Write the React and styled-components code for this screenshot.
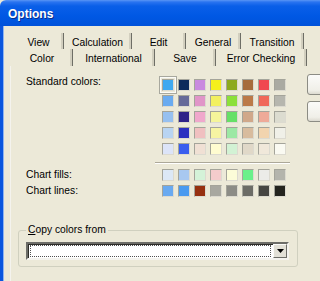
import React from "react";
import styled, { createGlobalStyle } from "styled-components";

const Global = createGlobalStyle`
  html, body {
    margin: 0;
    padding: 0;
    overflow: hidden;
    background: #ece9d8;
  }
`;

const Window = styled.div`
  width: 320px;
  height: 281px;
  display: flex;
  flex-direction: column;
  overflow: hidden;
  font-family: "Liberation Sans", Arial, sans-serif;
  font-size: 10px;
  color: #000;
`;

const TitleBar = styled.div`
  height: 26px;
  box-sizing: border-box;
  flex: none;
  display: flex;
  align-items: center;
  padding: 2px 0 0 8px;
  background: linear-gradient(
    #5a96f5 0,
    #2a74f0 2px,
    #0a5fe8 6px,
    #0058e4 16px,
    #0052da 26px
  );
  border-top-left-radius: 6px;
  color: #fff;
  font-weight: bold;
  font-size: 12px;
  text-shadow: 1px 1px 0 #0a2f8c;
`;

const Frame = styled.div`
  flex: 1;
  display: flex;
  flex-direction: column;
  border-left: 3px solid #0a56de;
  box-shadow: inset 1px 0 0 #8fb4f0;
  background: #ece9d8;
  padding-top: 7px;
`;

const TabRow = styled.div`
  display: flex;
  height: ${p => p.$h}px;
  margin-left: ${p => p.$indent}px;
  flex: none;
`;

const Tab = styled.div`
  box-sizing: border-box;
  flex: none;
  display: flex;
  align-items: center;
  justify-content: center;
  height: 100%;
  border-right: 1px solid #6e6e66;
  box-shadow: inset -2px 0 0 #d2cfbf;
  white-space: nowrap;
  overflow: hidden;
  padding-top: 2px;
  font-size: 10.3px;
`;

const Panel = styled.div`
  flex: 1;
  margin-left: 7px;
  border-left: 1px solid #f4f3ee;
  padding: 10px 0 0 7px;
  display: flex;
  flex-direction: column;
`;

const StandardRow = styled.div`
  display: flex;
  align-items: flex-start;
  padding-left: 8px;
`;

const Label = styled.div`
  width: 134px;
  flex: none;
  line-height: 12px;
  white-space: nowrap;
  font-size: 10.3px;
`;

const SwatchGrid = styled.div`
  display: grid;
  grid-template-columns: repeat(8, 16px);
  grid-auto-rows: 16px;
  margin-top: 1px;
  flex: none;
`;

const Cell = styled.div`
  display: flex;
  align-items: center;
  justify-content: center;
`;

const Swatch = styled.div`
  box-sizing: border-box;
  width: 12px;
  height: 12px;
  border: 1px solid;
  border-color: #a4a49a #dcdad0 #dcdad0 #a4a49a;
  background: ${p => p.$color};
  box-shadow: ${p =>
    p.$selected ? "0 0 0 1px #ece9d8, 0 0 0 2px #fbfbf8, 0 0 0 3px #a8a89e" : "none"};
`;

const SideButtons = styled.div`
  display: flex;
  flex-direction: column;
  gap: 6px;
  margin-left: 19px;
  margin-top: -2px;
  flex: none;
`;

const SideButton = styled.div`
  width: 75px;
  height: 21px;
  box-sizing: border-box;
  border: 1px solid #8c8c84;
  border-radius: 3px;
  background: linear-gradient(#fbfbf9, #f0efe8 80%, #dcdad0);
`;

const Divider = styled.div`
  margin: 5px 0 0 137px;
  width: 135px;
  height: 1px;
  background: #aca899;
  border-bottom: 1px solid #fff;
  flex: none;
`;

const ChartRows = styled.div`
  display: flex;
  flex-direction: column;
  margin-top: 3px;
  padding-left: 8px;
`;

const ChartRow = styled.div`
  display: flex;
  align-items: center;
  height: 16px;
`;

const SwatchLine = styled.div`
  display: grid;
  grid-template-columns: repeat(8, 16px);
  height: 16px;
`;

const Group = styled.fieldset`
  margin: 25px 0 0 0;
  width: 280px;
  box-sizing: border-box;
  border: 1px solid #d0d0bf;
  border-radius: 3px;
  padding: 6px 0 6px 7px;
  min-inline-size: 0;
`;

const Legend = styled.legend`
  margin-left: 0;
  padding: 0 2px 0 2px;
  line-height: 12px;
  font-size: 10.3px;
`;

const Combo = styled.div`
  width: 263px;
  height: 18px;
  box-sizing: border-box;
  display: flex;
  align-items: stretch;
  background: #fff;
  border: 2px solid;
  border-color: #6d6d68 #f4f3ee #f4f3ee #6d6d68;
  box-shadow: inset 1px 1px 0 #2c2c28;
`;

const ComboField = styled.div`
  flex: 1;
  margin: 1px 2px 1px 2px;
  border: 1px dotted #505050;
`;

const ComboArrow = styled.div`
  width: 14px;
  flex: none;
  box-sizing: border-box;
  display: flex;
  align-items: center;
  justify-content: center;
  background: #e2e0d6;
  border: 1px solid;
  border-color: #fbfbf8 #6d6d68 #6d6d68 #fbfbf8;
`;

const backTabs = [
  { label: "View", width: 50 },
  { label: "Calculation", width: 68 },
  { label: "Edit", width: 54 },
  { label: "General", width: 55 },
  { label: "Transition", width: 63 },
  { label: "Chart", width: 60 }
];

const frontTabs = [
  { label: "Color", width: 61 },
  { label: "International", width: 82 },
  { label: "Save", width: 61 },
  { label: "Error Checking", width: 91 },
  { label: "", width: 60 }
];

const standard = [
  ["#3fa9f0", "#0d2b5c", "#c98adf", "#f5f01c", "#8daa1e", "#a66c3c", "#f04850", "#aaaaa2"],
  ["#6aabf0", "#666a99", "#e095c8", "#f2f060", "#8ce03a", "#bb7a48", "#f0685a", "#b6b6ae"],
  ["#96c0f0", "#2e2288", "#f0a8cc", "#f5f59a", "#66e066", "#d0a88a", "#eeaa98", "#dcdcd0"],
  ["#b8d4f2", "#2b2fc0", "#f0c0c0", "#f6f4a2", "#9ce8a4", "#d8bc9e", "#f2d4ae", "#f0f0e8"],
  ["#dce4f8", "#3a5eee", "#f0e0d4", "#fffcd0", "#d2f2d4", "#e0d8c8", "#f0e8da", "#fafaf2"]
];

const chartFills = ["#dce8f6", "#a8c8f0", "#d4f2d8", "#f4cccc", "#fcfcd8", "#6af08a", "#ecece8", "#b4b4ac"];
const chartLines = ["#6aaaf0", "#4a9af0", "#963010", "#a8a8a0", "#8c8c86", "#6c6c66", "#464642", "#24241e"];

const App = () => {
  return (
    <>
      <Global />
      <Window>
        <TitleBar>Options</TitleBar>
        <Frame>
          <TabRow $h={16} $indent={11}>
            {backTabs.map(t => (
              <Tab key={t.label} style={{ width: t.width }}>
                {t.label}
              </Tab>
            ))}
          </TabRow>
          <TabRow $h={17} $indent={9}>
            {frontTabs.map((t, i) => (
              <Tab key={i} style={{ width: t.width }}>
                {t.label}
              </Tab>
            ))}
          </TabRow>

          <Panel>
            <StandardRow>
              <Label>Standard colors:</Label>
              <SwatchGrid>
                {standard.flat().map((c, i) => (
                  <Cell key={i}>
                    <Swatch $color={c} $selected={i === 0} />
                  </Cell>
                ))}
              </SwatchGrid>
              <SideButtons>
                <SideButton />
                <SideButton />
              </SideButtons>
            </StandardRow>

            <Divider />

            <ChartRows>
              <ChartRow>
                <Label>Chart fills:</Label>
                <SwatchLine>
                  {chartFills.map((c, i) => (
                    <Cell key={i}>
                      <Swatch $color={c} />
                    </Cell>
                  ))}
                </SwatchLine>
              </ChartRow>
              <ChartRow>
                <Label>Chart lines:</Label>
                <SwatchLine>
                  {chartLines.map((c, i) => (
                    <Cell key={i}>
                      <Swatch $color={c} />
                    </Cell>
                  ))}
                </SwatchLine>
              </ChartRow>
            </ChartRows>

            <Group>
              <Legend>
                <u>C</u>opy colors from
              </Legend>
              <Combo>
                <ComboField />
                <ComboArrow>
                  <svg width="7" height="4" viewBox="0 0 7 4">
                    <path d="M0 0h7L3.5 4z" fill="#000" />
                  </svg>
                </ComboArrow>
              </Combo>
            </Group>
          </Panel>
        </Frame>
      </Window>
    </>
  );
};

export default App;
